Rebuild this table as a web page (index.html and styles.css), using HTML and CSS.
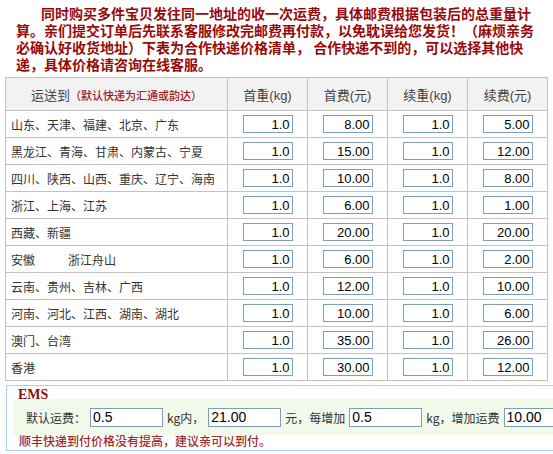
FILE: index.html
```html
<!DOCTYPE html>
<html lang="zh-CN">
<head>
<meta charset="utf-8">
<title>运费说明</title>
<link rel="stylesheet" href="styles.css">
</head>
<body>
<div class="page">
  <p class="notice">同时购买多件宝贝发往同一地址的收一次运费，具体邮费根据包装后的总重量计<br>算。亲们提交订单后先联系客服修改完邮费再付款，以免耽误给您发货！（麻烦亲务<br>必确认好收货地址）下表为合作快递价格清单， 合作快递不到的，可以选择其他快<br>递，具体价格请咨询在线客服。</p>

  <table class="rates">
    <colgroup>
      <col class="c-dest"><col class="c-num"><col class="c-num"><col class="c-num"><col class="c-num">
    </colgroup>
    <thead>
      <tr>
        <th>运送到<span class="hint">（默认快递为汇通或韵达）</span></th>
        <th>首重(kg)</th>
        <th>首费(元)</th>
        <th>续重(kg)</th>
        <th>续费(元)</th>
      </tr>
    </thead>
    <tbody>
      <tr><td class="dest">山东、天津、福建、北京、广东</td><td><input class="num" value="1.0"></td><td><input class="num" value="8.00"></td><td><input class="num" value="1.0"></td><td><input class="num" value="5.00"></td></tr>
      <tr><td class="dest">黑龙江、青海、甘肃、内蒙古、宁夏</td><td><input class="num" value="1.0"></td><td><input class="num" value="15.00"></td><td><input class="num" value="1.0"></td><td><input class="num" value="12.00"></td></tr>
      <tr><td class="dest">四川、陕西、山西、重庆、辽宁、海南</td><td><input class="num" value="1.0"></td><td><input class="num" value="10.00"></td><td><input class="num" value="1.0"></td><td><input class="num" value="8.00"></td></tr>
      <tr><td class="dest">浙江、上海、江苏</td><td><input class="num" value="1.0"></td><td><input class="num" value="6.00"></td><td><input class="num" value="1.0"></td><td><input class="num" value="1.00"></td></tr>
      <tr><td class="dest">西藏、新疆</td><td><input class="num" value="1.0"></td><td><input class="num" value="20.00"></td><td><input class="num" value="1.0"></td><td><input class="num" value="20.00"></td></tr>
      <tr><td class="dest">安徽<span class="gap"></span>浙江舟山</td><td><input class="num" value="1.0"></td><td><input class="num" value="6.00"></td><td><input class="num" value="1.0"></td><td><input class="num" value="2.00"></td></tr>
      <tr><td class="dest">云南、贵州、吉林、广西</td><td><input class="num" value="1.0"></td><td><input class="num" value="12.00"></td><td><input class="num" value="1.0"></td><td><input class="num" value="10.00"></td></tr>
      <tr><td class="dest">河南、河北、江西、湖南、湖北</td><td><input class="num" value="1.0"></td><td><input class="num" value="10.00"></td><td><input class="num" value="1.0"></td><td><input class="num" value="6.00"></td></tr>
      <tr><td class="dest">澳门、台湾</td><td><input class="num" value="1.0"></td><td><input class="num" value="35.00"></td><td><input class="num" value="1.0"></td><td><input class="num" value="26.00"></td></tr>
      <tr><td class="dest">香港</td><td><input class="num" value="1.0"></td><td><input class="num" value="30.00"></td><td><input class="num" value="1.0"></td><td><input class="num" value="12.00"></td></tr>
    </tbody>
  </table>

  <div class="ems">
    <div class="ems-title">EMS</div>
    <div class="ems-row">
      <span class="lbl">默认运费：</span>
      <input class="field" value="0.5">
      <span>kg内，</span>
      <input class="field" value="21.00">
      <span>元，每增加</span>
      <input class="field" value="0.5">
      <span>kg，增加运费</span>
      <input class="field" value="10.00">
    </div>
    <p class="ems-note">顺丰快递到付价格没有提高，建议亲可以到付。</p>
  </div>
</div>
</body>
</html>
```

FILE: styles.css
```css
html, body {
  margin: 0;
  padding: 0;
  background: #fff;
  overflow: hidden;
}

body {
  font-family: "Liberation Sans", "Noto Sans CJK SC", sans-serif;
  color: #333;
}

.page {
  width: 620px;
  padding: 0 0 0 5px;
}

.notice {
  margin: 0;
  padding: 5px 0 4px 11px;
  font-family: "Noto Sans CJK SC", sans-serif;
  font-size: 14px;
  font-weight: bold;
  line-height: 17px;
  color: #980a0a;
  text-indent: 25px;
  white-space: nowrap;
}

.rates {
  width: 543px;
  border-collapse: collapse;
  border: 1px solid #c2c2c2;
  table-layout: fixed;
}

.c-dest { width: 222px; }
.c-num { width: 80px; }

.rates th,
.rates td {
  border: 1px solid #c2c2c2;
  padding: 0;
}

.rates th {
  height: 32px;
  background: #f2f2f2;
  font-weight: normal;
  font-size: 13px;
  color: #444;
  text-align: center;
  font-family: "Liberation Sans", "Noto Sans CJK SC", sans-serif;
}

.hint {
  color: #a01c1c;
  font-size: 11px;
  font-weight: 500;
  font-family: "Noto Sans CJK SC", sans-serif;
}

.rates td {
  height: 26px;
  text-align: center;
}

.rates td.dest {
  text-align: left;
  padding-left: 5px;
  font-family: "Noto Sans CJK SC", sans-serif;
  font-size: 12px;
  color: #333;
}

.gap {
  display: inline-block;
  width: 33px;
}

.num {
  box-sizing: border-box;
  width: 50px;
  height: 18px;
  margin: 0;
  padding: 0 2px 0 0;
  border: 1px solid #7f9db9;
  text-align: right;
  font-family: "Liberation Sans", sans-serif;
  font-size: 13px;
  color: #000;
  vertical-align: middle;
  background: #fff;
}

.ems {
  margin: 4px 0 0 1px;
  border: 1px solid #aecbf0;
  padding: 0 0 0 6px;
  height: 64px;
}

.ems-title {
  font-family: "Liberation Serif", serif;
  font-size: 14px;
  font-weight: bold;
  color: #8c0f0f;
  line-height: 13px;
  padding: 2px 0 0 5px;
  height: 11px;
}

.ems-row {
  display: flex;
  align-items: center;
  gap: 5px;
  height: 36px;
  background: #f1f9ea;
  font-family: "Noto Sans CJK SC", sans-serif;
  font-size: 12px;
  color: #333;
}

.ems-row span {
  margin: 0 -1px;
}

.lbl {
  padding-left: 14px;
}

.field {
  box-sizing: border-box;
  width: 73px;
  height: 19px;
  margin: 0;
  padding: 0 0 0 2px;
  border: 1px solid #7f9db9;
  font-family: "Liberation Sans", sans-serif;
  font-size: 14px;
  color: #000;
  background: #fff;
  flex: none;
}

.ems-note {
  margin: 0;
  padding: 0 0 0 6px;
  line-height: 12px;
  font-family: "Noto Sans CJK SC", sans-serif;
  font-size: 12px;
  font-weight: 500;
  color: #a3292b;
}
```
